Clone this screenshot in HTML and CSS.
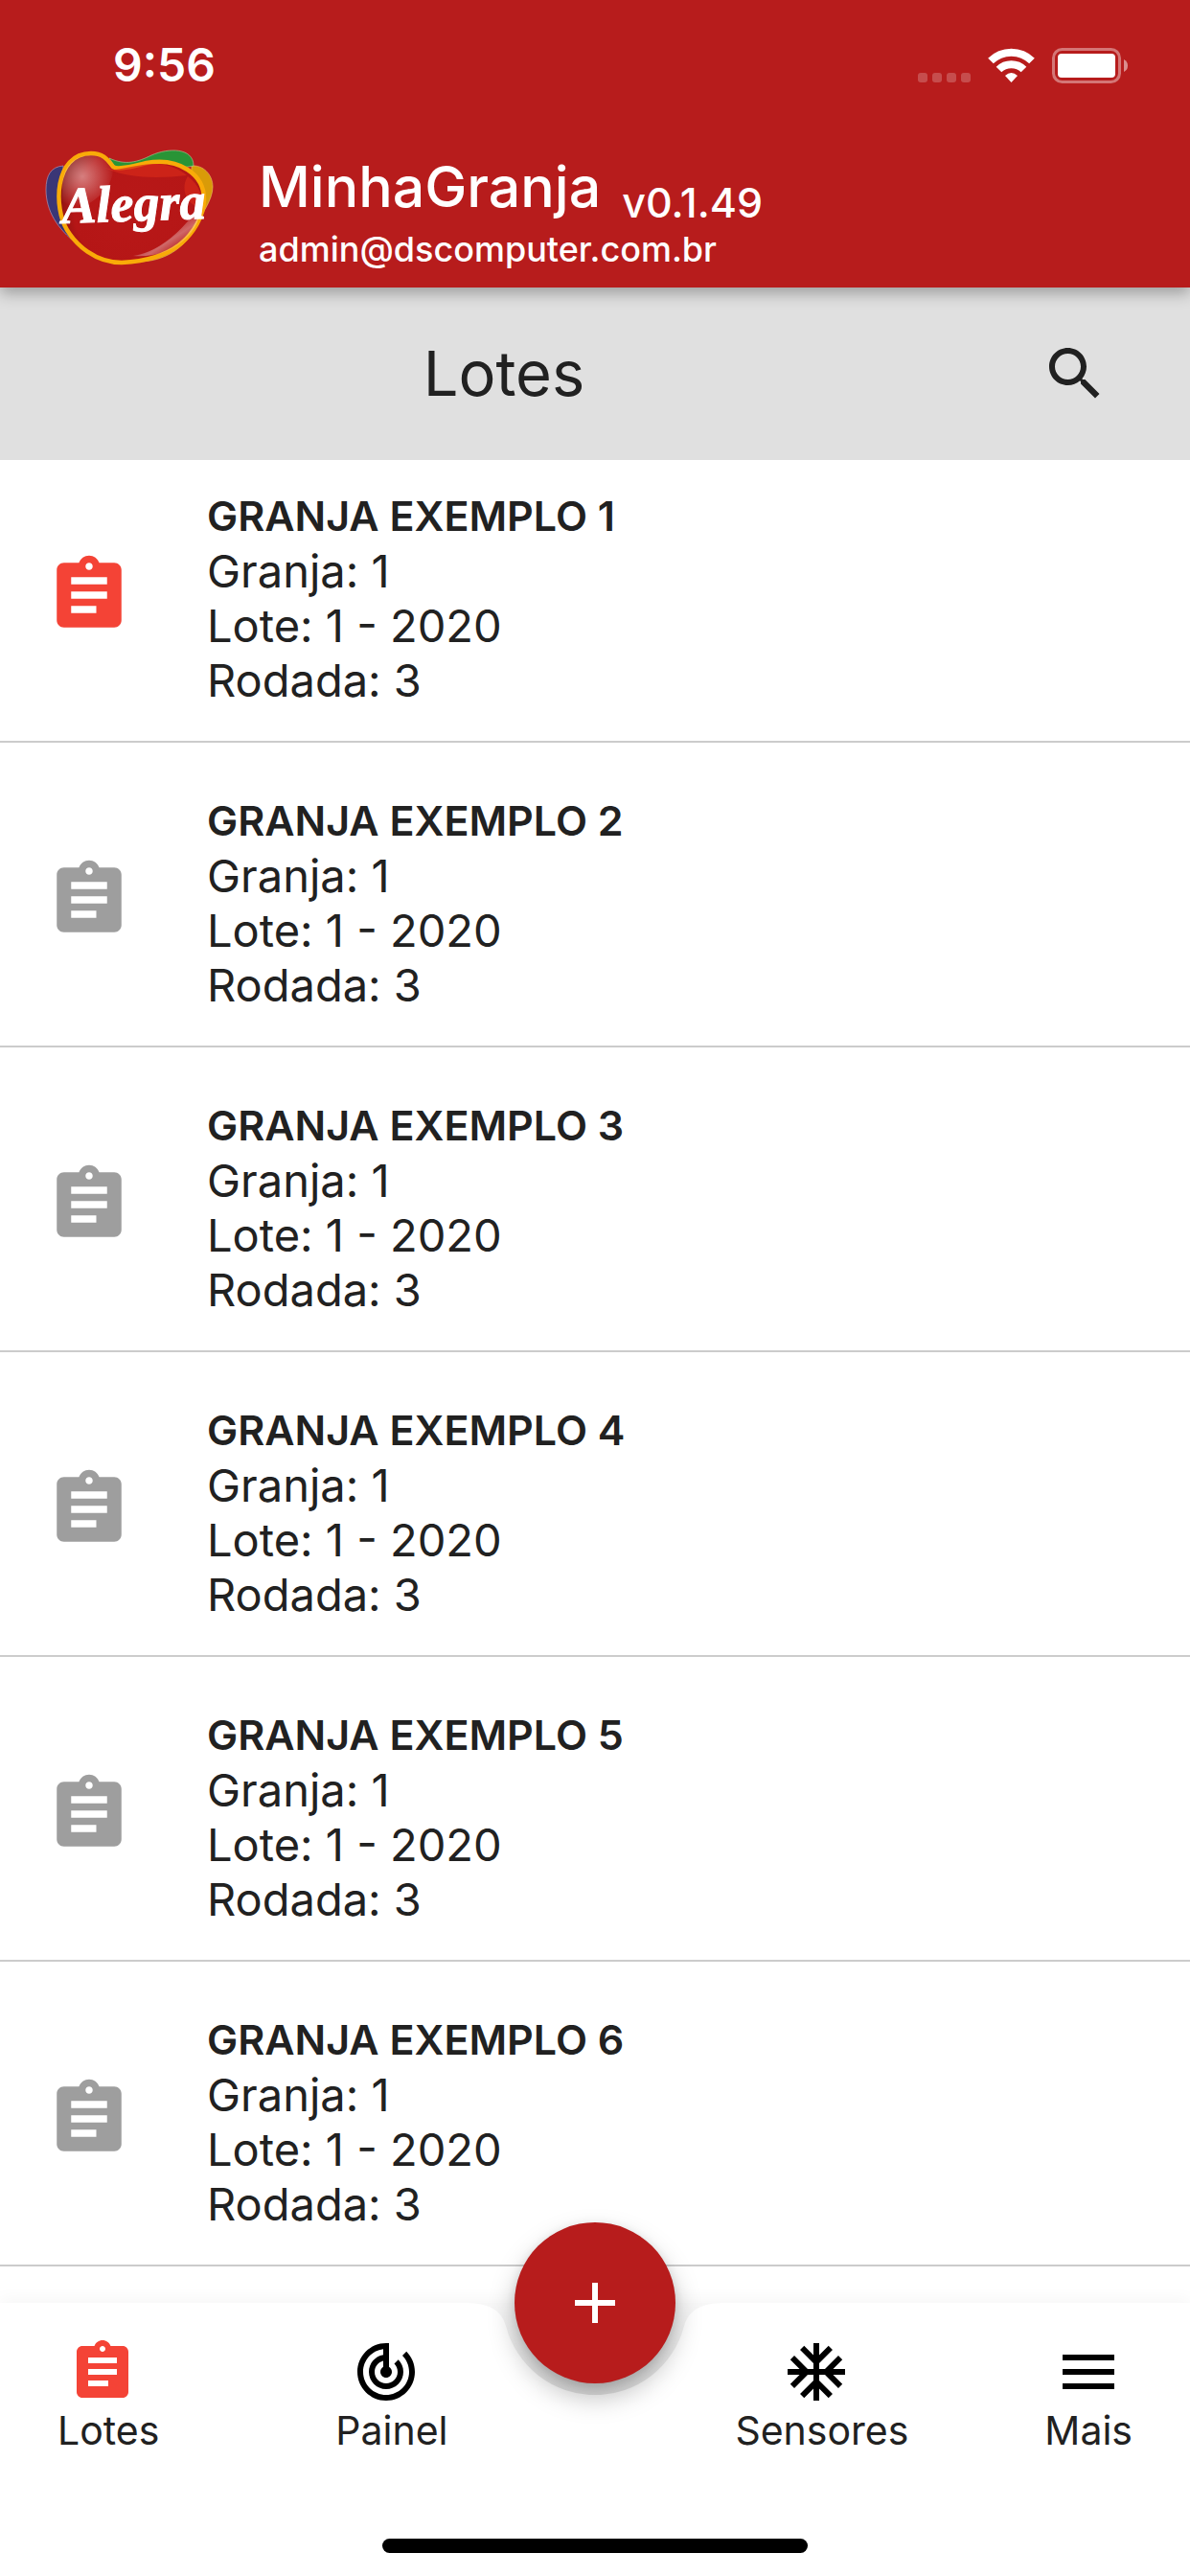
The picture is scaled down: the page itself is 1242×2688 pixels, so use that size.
FILE: index.html
```html
<!DOCTYPE html>
<html lang="pt-BR">
<head>
    <meta charset="utf-8">
    <meta name="viewport" content="width=device-width, initial-scale=1">
    <title>MinhaGranja</title>
    <link rel="stylesheet" href="styles.css">
</head>
<body>
    <svg class="sprite" aria-hidden="true">
        <symbol id="clipboard" viewBox="0 0 24 24">
            <path d="M19 3h-4.18C14.4 1.84 13.3 1 12 1c-1.3 0-2.4.84-2.82 2H5c-1.1 0-2 .9-2 2v14c0 1.1.9 2 2 2h14c1.1 0 2-.9 2-2V5c0-1.1-.9-2-2-2zm-7 0c.55 0 1 .45 1 1s-.45 1-1 1-1-.45-1-1 .45-1 1-1zm2 14H7v-2h7v2zm3-4H7v-2h10v2zm0-4H7V7h10v2z"/>
        </symbol>
    </svg>

    <header class="header">
        <div class="status">
            <span class="time">9:56</span>
            <svg class="status-icons" viewBox="0 0 220 37">
                <g fill="#fff" fill-opacity=".22">
                    <rect x="0" y="26" width="10" height="10" rx="3"/>
                    <rect x="15" y="26" width="10" height="10" rx="3"/>
                    <rect x="30" y="26" width="10" height="10" rx="3"/>
                    <rect x="45" y="26" width="10" height="10" rx="3"/>
                </g>
                <g fill="none" stroke="#fff" stroke-width="8">
                    <path d="M76 13.5A30.5 30.5 0 0 1 119 13.5"/>
                    <path d="M84.5 22.5A18.5 18.5 0 0 1 110.5 22.5"/>
                </g>
                <path fill="#fff" d="M91 29Q97.5 23 104 29L97.5 36Z"/>
                <rect x="141.5" y="1.5" width="69" height="34" rx="9" fill="none" stroke="#fff" stroke-opacity=".4" stroke-width="3"/>
                <rect x="146" y="6" width="60" height="25" rx="4" fill="#fff"/>
                <path fill="#fff" fill-opacity=".5" d="M215 12q4 2 4 6.500t-4 6.500z"/>
            </svg>
        </div>
        <div class="brand">
            <svg class="logo" viewBox="0 0 174 120" role="img" aria-label="Alegra">
                <defs>
                    <radialGradient id="heart" cx="95" cy="62" r="88" gradientUnits="userSpaceOnUse">
                        <stop offset="0" stop-color="#b81818"/>
                        <stop offset=".75" stop-color="#b51616"/>
                        <stop offset="1" stop-color="#7d1210"/>
                    </radialGradient>
                    <radialGradient id="shine" cx="38" cy="28" r="34" gradientUnits="userSpaceOnUse">
                        <stop offset="0" stop-color="#fff" stop-opacity=".45"/>
                        <stop offset="1" stop-color="#fff" stop-opacity="0"/>
                    </radialGradient>
                    <linearGradient id="glow" x1="115" y1="82" x2="132" y2="108" gradientUnits="userSpaceOnUse">
                        <stop offset="0" stop-color="#fff" stop-opacity="0"/>
                        <stop offset=".6" stop-color="#fff" stop-opacity=".35"/>
                        <stop offset="1" stop-color="#fff" stop-opacity=".05"/>
                    </linearGradient>
                </defs>
                <path fill="#3a3676" stroke="#b9a5c4" stroke-width=".6" d="M18 17C5 18 0 27 0 42c0 22 12 41 32 56L16 60z"/>
                <path fill="#d99b08" stroke="#e9c46a" stroke-width=".6" d="M152 17c12-1 22 9 22 22 0 14-12 29-21 46-9 18-30 32-56 32L150 76z"/>
                <path fill="#299436" stroke="#a8d5a0" stroke-width=".6" d="M66 9c17 8 30 4 44-3 18-8 44-8 44 11l-12 2-58 1-12-2z"/>
                <path fill="url(#heart)" stroke="#f9ab08" stroke-width="4.5" d="M47 4C61 4 65 12 70 18c5 4 23-1 35-4 34-6 60 12 60 38 0 18-12 36-24 46-18 15-42 19-62 20-28 0-48-19-57-34C8 62 8 4 47 4z"/>
                <path fill="#d62a1a" fill-opacity=".7" d="M69 21c12 0 27-6 45-6 13 0 25 5 33 12-28 3-60 4-86-8z"/>
                <path fill="#d62a1a" fill-opacity=".7" d="M148 28c12 9 16 20 14 33-16-3-22-21-14-33z"/>
                <path fill="url(#shine)" d="M17 40C17 16 31 6 47 6c13 0 18 8 23 14 0 22-24 42-54 46z"/>
                <path fill="url(#glow)" d="M91 111c26-4 50-24 71-54-1 32-30 57-71 54z"/>
                <text class="logo-text" x="17" y="77" transform="rotate(-2 17 77)">Alegra</text>
            </svg>
            <div class="brand-text">
                <div class="brand-line">
                    <h1 class="app-name">MinhaGranja</h1>
                    <span class="version">v0.1.49</span>
                </div>
                <div class="email">admin@dscomputer.com.br</div>
            </div>
        </div>
    </header>

    <div class="toolbar">
        <h2 class="toolbar-title">Lotes</h2>
        <button class="search" type="button" aria-label="Buscar">
            <svg class="nav-icon" viewBox="0 0 24 24"><path d="M15.5 14h-.79l-.28-.27C15.41 12.59 16 11.11 16 9.5 16 5.91 13.09 3 9.5 3S3 5.91 3 9.5 5.91 16 9.5 16c1.61 0 3.09-.59 4.23-1.57l.27.28v.79l5 4.99L20.49 19l-4.99-5zm-6 0C7.01 14 5 11.99 5 9.5S7.01 5 9.5 5 14 7.01 14 9.5 11.99 14 9.5 14z"/></svg>
        </button>
    </div>

    <ul class="list">
        <li class="item active">
            <svg class="item-icon"><use href="#clipboard"/></svg>
            <div class="item-text">
                <h3 class="item-title">GRANJA EXEMPLO 1</h3>
                <p>Granja: 1</p>
                <p>Lote: 1 - 2020</p>
                <p>Rodada: 3</p>
            </div>
        </li>
        <li class="item">
            <svg class="item-icon"><use href="#clipboard"/></svg>
            <div class="item-text">
                <h3 class="item-title">GRANJA EXEMPLO 2</h3>
                <p>Granja: 1</p>
                <p>Lote: 1 - 2020</p>
                <p>Rodada: 3</p>
            </div>
        </li>
        <li class="item">
            <svg class="item-icon"><use href="#clipboard"/></svg>
            <div class="item-text">
                <h3 class="item-title">GRANJA EXEMPLO 3</h3>
                <p>Granja: 1</p>
                <p>Lote: 1 - 2020</p>
                <p>Rodada: 3</p>
            </div>
        </li>
        <li class="item">
            <svg class="item-icon"><use href="#clipboard"/></svg>
            <div class="item-text">
                <h3 class="item-title">GRANJA EXEMPLO 4</h3>
                <p>Granja: 1</p>
                <p>Lote: 1 - 2020</p>
                <p>Rodada: 3</p>
            </div>
        </li>
        <li class="item">
            <svg class="item-icon"><use href="#clipboard"/></svg>
            <div class="item-text">
                <h3 class="item-title">GRANJA EXEMPLO 5</h3>
                <p>Granja: 1</p>
                <p>Lote: 1 - 2020</p>
                <p>Rodada: 3</p>
            </div>
        </li>
        <li class="item">
            <svg class="item-icon"><use href="#clipboard"/></svg>
            <div class="item-text">
                <h3 class="item-title">GRANJA EXEMPLO 6</h3>
                <p>Granja: 1</p>
                <p>Lote: 1 - 2020</p>
                <p>Rodada: 3</p>
            </div>
        </li>
    </ul>

    <nav class="nav">
        <!-- cut-out around the add button -->
        <svg class="notch" viewBox="0 0 280 96">
            <defs>
                <linearGradient id="notchFill" x1="0" y1="0" x2="0" y2="1">
                    <stop offset="0" stop-color="#000" stop-opacity=".03"/>
                    <stop offset="1" stop-color="#000" stop-opacity=".11"/>
                </linearGradient>
            </defs>
            <path fill="url(#notchFill)" d="M4 0C30 0 42 8 47 24A96 96 0 0 0 233 24C238 8 250 0 276 0Z"/>
        </svg>
        <button class="fab" type="button" aria-label="Adicionar">
            <svg class="nav-icon" viewBox="0 0 24 24"><path d="M19 13h-6v6h-2v-6H5v-2h6V5h2v6h6v2z"/></svg>
        </button>
        <div class="nav-row">
            <div class="nav-left">
                <button class="nav-item active" type="button">
                    <svg class="nav-icon"><use href="#clipboard"/></svg>
                    <span>Lotes</span>
                </button>
                <button class="nav-item" type="button">
                    <svg class="nav-icon" viewBox="0 0 24 24"><path d="M19.07 4.93l-1.41 1.41C19.1 7.79 20 9.79 20 12c0 4.42-3.58 8-8 8s-8-3.58-8-8c0-4.08 3.05-7.44 7-7.93v2.02C8.16 6.57 6 9.03 6 12c0 3.31 2.69 6 6 6s6-2.69 6-6c0-1.66-.67-3.16-1.76-4.24l-1.41 1.41C15.55 9.9 16 10.9 16 12c0 2.21-1.79 4-4 4s-4-1.79-4-4c0-1.86 1.28-3.41 3-3.86v2.14c-.6.35-1 .98-1 1.72 0 1.1.9 2 2 2s2-.9 2-2c0-.74-.4-1.38-1-1.72V2h-1C6.48 2 2 6.48 2 12s4.48 10 10 10 10-4.48 10-10c0-2.76-1.12-5.26-2.93-7.07z"/></svg>
                    <span>Painel</span>
                </button>
            </div>
            <div class="nav-right">
                <button class="nav-item" type="button">
                    <svg class="nav-icon" viewBox="0 0 24 24"><path d="M22 11h-4.17l3.24-3.24-1.41-1.42L15 11h-2V9l4.66-4.66-1.42-1.41L13 6.17V2h-2v4.17L7.76 2.93 6.34 4.34 11 9v2H9L4.34 6.34 2.93 7.76 6.17 11H2v2h4.17l-3.24 3.24 1.41 1.42L9 13h2v2l-4.66 4.66 1.42 1.41L11 17.83V22h2v-4.17l3.24 3.24 1.42-1.41L13 15v-2h2l4.66 4.66 1.41-1.42L17.83 13H22z"/></svg>
                    <span>Sensores</span>
                </button>
                <button class="nav-item" type="button">
                    <svg class="nav-icon" viewBox="0 0 24 24"><path d="M3 18h18v-2H3v2zm0-5h18v-2H3v2zm0-7v2h18V6H3z"/></svg>
                    <span>Mais</span>
                </button>
            </div>
        </div>
        <div class="home-bar"></div>
    </nav>
</body>
</html>
```

FILE: styles.css
```css
* {
    box-sizing: border-box;
    margin: 0;
    padding: 0;
}
body {
    display: flex;
    flex-direction: column;
    height: 100vh;
    overflow: hidden;
    background: #fff;
    color: #212121;
    font-family: Inter, "Liberation Sans", sans-serif;
    font-size: 47px;
    line-height: 57px;
}
button {
    border: none;
    background: none;
    font: inherit;
    color: inherit;
    cursor: pointer;
}
svg {
    display: block;
    fill: currentColor;
}
.sprite {
    position: absolute;
    width: 0;
    height: 0;
}

/* header */
.header {
    position: relative;
    z-index: 1;
    height: 300px;
    background: #b71c1c;
    color: #fff;
    box-shadow: 0 6px 15px rgba(0, 0, 0, 0.3);
}
.status {
    display: flex;
    justify-content: space-between;
    align-items: center;
    padding: 38px 64px 0 118px;
}
.time {
    font-size: 48px;
    line-height: 60px;
    font-weight: 600;
}
.status-icons {
    width: 220px;
    height: 37px;
}
.brand {
    display: flex;
    align-items: flex-start;
    gap: 48px;
    padding: 58px 48px 0;
}
.logo {
    width: 174px;
    height: 120px;
    overflow: visible;
}
.logo-text {
    fill: #fff;
    stroke: #fff;
    stroke-width: 1;
    font: italic bold 54px "Liberation Serif", serif;
}
.brand-text {
    padding-top: 2px;
}
.brand-line {
    display: flex;
    align-items: flex-end;
    gap: 22px;
    height: 78px;
}
.app-name {
    align-self: flex-start;
    font-size: 59px;
    line-height: 74px;
    font-weight: 500;
}
.version {
    font-size: 43px;
    line-height: 50px;
    font-weight: 500;
}
.email {
    font-size: 36px;
    line-height: 48px;
    font-weight: 500;
}

/* title bar */
.toolbar {
    display: flex;
    align-items: center;
    height: 180px;
    padding-right: 84px;
    background: #e0e0e0;
}
.toolbar-title {
    flex: 1;
    text-align: center;
    font-size: 65px;
    line-height: 84px;
    font-weight: 400;
}
.search {
    padding-left: 34px;
}

/* list */
.list {
    flex: 1;
    min-height: 0;
    overflow: hidden;
    list-style: none;
}
.item {
    display: flex;
    gap: 78px;
    padding: 53px 48px 35px;
    border-bottom: 2px solid #ccc;
}
.item:first-child {
    padding-top: 30px;
}
.item-icon {
    width: 90px;
    height: 90px;
    margin-top: 66px;
    color: #9e9e9e;
}
.item-title {
    font-size: 43px;
    line-height: 57px;
    font-weight: 600;
}
.active .item-icon {
    color: #f44336;
}

/* bottom bar */
.nav {
    position: relative;
    height: 285px;
    background: #fff;
    box-shadow: 0 -4px 16px rgba(0, 0, 0, 0.04);
}
.notch {
    position: absolute;
    top: 0;
    left: 50%;
    width: 280px;
    height: 96px;
    margin-left: -140px;
}
.fab {
    position: absolute;
    top: -84px;
    left: 50%;
    width: 168px;
    height: 168px;
    margin-left: -84px;
    padding: 48px;
    border-radius: 50%;
    background: #b71c1c;
    color: #fff;
    box-shadow: 0 14px 28px rgba(0, 0, 0, 0.26), 0 2px 10px rgba(0, 0, 0, 0.1);
}
.nav-row {
    display: flex;
    justify-content: space-between;
    padding: 36px 60px 0;
    font-size: 41px;
    line-height: 50px;
}
.nav-left {
    display: flex;
    gap: 184px;
}
.nav-right {
    display: flex;
    gap: 142px;
}
.nav-item {
    display: flex;
    flex-direction: column;
    align-items: center;
}
.nav-icon {
    width: 72px;
    height: 72px;
}
.nav-item .nav-icon {
    margin-right: 12px;
    color: #000;
}
.nav-item.active .nav-icon {
    color: #f44336;
}
.nav-right .nav-item:last-child .nav-icon {
    margin-right: 0;
}
.home-bar {
    width: 444px;
    height: 15px;
    margin: 88px auto 0;
    border-radius: 8px;
    background: #000;
}
```
